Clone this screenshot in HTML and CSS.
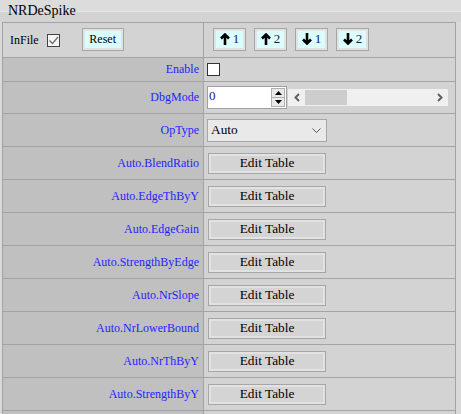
FILE: index.html
```html
<!DOCTYPE html>
<html>
<head>
<meta charset="utf-8">
<link rel="stylesheet" href="styles.css">
</head>
<body>
<div class="title">NRDeSpike</div>
<div class="grid">
  <div class="cell top lcell">
    <span class="infile">InFile</span>
    <span class="cb checked"><svg width="11" height="11" viewBox="0 0 11 11"><polyline points="1.5,5.5 4.5,8.5 10,2" fill="none" stroke="#707070" stroke-width="1.3"/></svg></span>
    <span class="btn cyan reset">Reset</span>
  </div>
  <div class="cell top rcell arrows">
    <span class="btn cyan arr"><svg class="ico" width="10" height="12" viewBox="0 0 10 12"><path d="M1 5.5 L5 1.5 L9 5.5 M5 2 V12" fill="none" stroke="#000" stroke-width="2.6"/></svg><span class="n">1</span></span>
    <span class="btn cyan arr"><svg class="ico" width="10" height="12" viewBox="0 0 10 12"><path d="M1 5.5 L5 1.5 L9 5.5 M5 2 V12" fill="none" stroke="#000" stroke-width="2.6"/></svg><span class="n">2</span></span>
    <span class="btn cyan arr"><svg class="ico" width="10" height="12" viewBox="0 0 10 12"><path d="M1 6.5 L5 10.5 L9 6.5 M5 0 V10" fill="none" stroke="#000" stroke-width="2.6"/></svg><span class="n">1</span></span>
    <span class="btn cyan arr"><svg class="ico" width="10" height="12" viewBox="0 0 10 12"><path d="M1 6.5 L5 10.5 L9 6.5 M5 0 V10" fill="none" stroke="#000" stroke-width="2.6"/></svg><span class="n">2</span></span>
  </div>

  <div class="cell lab">Enable</div>
  <div class="cell rcell"><span class="cb"></span></div>

  <div class="cell lab">DbgMode</div>
  <div class="cell rcell">
    <span class="num"><span class="numtxt">0</span>
      <span class="spin">
        <span class="sp"><svg width="7" height="4" viewBox="0 0 7 4"><polygon points="0,4 3.5,0 7,4" fill="#000"/></svg></span>
        <span class="sp"><svg width="7" height="4" viewBox="0 0 7 4"><polygon points="0,0 3.5,4 7,0" fill="#000"/></svg></span>
      </span>
    </span>
    <span class="hscroll">
      <span class="chev"><svg width="6" height="9" viewBox="0 0 6 9"><polyline points="5,1 1.5,4.5 5,8" fill="none" stroke="#606060" stroke-width="2"/></svg></span>
      <span class="thumb"></span>
      <span class="spacer"></span>
      <span class="chev"><svg width="6" height="9" viewBox="0 0 6 9"><polyline points="1,1 4.5,4.5 1,8" fill="none" stroke="#606060" stroke-width="2"/></svg></span>
    </span>
  </div>

  <div class="cell lab">OpType</div>
  <div class="cell rcell">
    <span class="sel"><span class="seltxt">Auto</span><svg width="9" height="5" viewBox="0 0 9 5"><polyline points="0.5,0.5 4.5,4.5 8.5,0.5" fill="none" stroke="#555" stroke-width="1"/></svg></span>
  </div>

  <div class="cell lab">Auto.BlendRatio</div>
  <div class="cell rcell et"><span class="btn edit">Edit Table</span></div>
  <div class="cell lab">Auto.EdgeThByY</div>
  <div class="cell rcell et"><span class="btn edit">Edit Table</span></div>
  <div class="cell lab">Auto.EdgeGain</div>
  <div class="cell rcell et"><span class="btn edit">Edit Table</span></div>
  <div class="cell lab">Auto.StrengthByEdge</div>
  <div class="cell rcell et"><span class="btn edit">Edit Table</span></div>
  <div class="cell lab">Auto.NrSlope</div>
  <div class="cell rcell et"><span class="btn edit">Edit Table</span></div>
  <div class="cell lab">Auto.NrLowerBound</div>
  <div class="cell rcell et"><span class="btn edit">Edit Table</span></div>
  <div class="cell lab">Auto.NrThByY</div>
  <div class="cell rcell et"><span class="btn edit">Edit Table</span></div>
  <div class="cell lab">Auto.StrengthByY</div>
  <div class="cell rcell et"><span class="btn edit">Edit Table</span></div>
  <div class="cell lab"></div>
  <div class="cell rcell et"></div>
</div>
</body>
</html>
```

FILE: styles.css
```css
html, body {
  margin: 0;
  padding: 0;
}
body {
  background: #d9d9d9;
  font-family: "Liberation Serif", "Times New Roman", serif;
  color: #000;
  overflow: hidden;
}
.title {
  height: 22px;
  line-height: 22px;
  font-size: 14px;
  padding-left: 8px;
  background: linear-gradient(#dcdcdc 0, #dcdcdc 11px, #e8e8e8 11px, #e8e8e8 12px, #d3d3d3 12px);
}
.grid {
  display: grid;
  grid-template-columns: 200px 251px;
  grid-template-rows: 34px 23px 31px 32px repeat(9, 32px);
  gap: 1px;
  background: #a3a3a3;
  border: 1px solid #a3a3a3;
  width: 452px;
  margin-left: 2px;
}
.cell {
  display: flex;
  align-items: center;
  background: #d3d3d3;
  min-width: 0;
}
.lab {
  background: #c0c0c0;
  justify-content: flex-end;
  padding-right: 4px;
  font-size: 12px;
  color: #1f1fff;
}
.lcell {
  padding-left: 7px;
}
.rcell {
  padding-left: 3px;
}
.infile {
  font-size: 12px;
}
.cb {
  width: 11px;
  height: 11px;
  border: 1px solid #333;
  background: #fff;
  display: flex;
  align-items: center;
  justify-content: center;
}
.cb.checked {
  margin-left: 8px;
  background: #f4f4f4;
  border-color: #444;
}
.btn {
  box-sizing: border-box;
  display: flex;
  align-items: center;
  justify-content: center;
  border: 1px solid #a6a6a6;
  box-shadow: inset 0 0 0 2px #e2e2e2;
  background: #d4d4d4;
}
.cyan {
  background: #dcfdfd;
}
.reset {
  margin-left: 22px;
  width: 42px;
  height: 23px;
  font-size: 12px;
  margin-top: -2px;
}
.arrows {
  padding-left: 9px;
  gap: 8px;
}
.arr {
  width: 33px;
  height: 23px;
  margin-top: -2px;
  gap: 2px;
}
.ico {
  display: block;
}
.n {
  font-size: 13px;
  color: #1a1a3a;
  margin-left: 1px;
}
.num {
  box-sizing: border-box;
  width: 80px;
  height: 23px;
  border: 1px solid #a0a0a0;
  background: #fff;
  display: flex;
  align-items: center;
  justify-content: space-between;
  padding-left: 1px;
  padding-right: 1px;
}
.numtxt {
  font-size: 13px;
  color: #10207a;
  align-self: flex-start;
  margin-top: 1px;
}
.spin {
  display: flex;
  flex-direction: column;
  width: 14px;
  height: 19px;
  border: 1px solid #b0b0b0;
  box-sizing: border-box;
}
.sp {
  flex: 1;
  display: flex;
  align-items: center;
  justify-content: center;
  background: #e9e9e9;
}
.sp + .sp {
  border-top: 1px solid #b0b0b0;
}
.hscroll {
  margin-left: 1px;
  width: 160px;
  height: 17px;
  background: #f0f0f0;
  display: flex;
  align-items: center;
}
.chev {
  width: 17px;
  display: flex;
  justify-content: center;
}
.thumb {
  width: 42px;
  height: 15px;
  background: #cdcdcd;
}
.spacer {
  flex: 1;
}
.sel {
  box-sizing: border-box;
  width: 120px;
  height: 23px;
  border: 1px solid #a6a6a6;
  background: #e9e9e9;
  display: flex;
  align-items: center;
  justify-content: space-between;
  padding-left: 3px;
  padding-right: 5px;
  font-size: 13.33px;
}
.et {
  padding-left: 4px;
}
.edit {
  width: 118px;
  height: 21px;
  font-size: 13.33px;
}
```
